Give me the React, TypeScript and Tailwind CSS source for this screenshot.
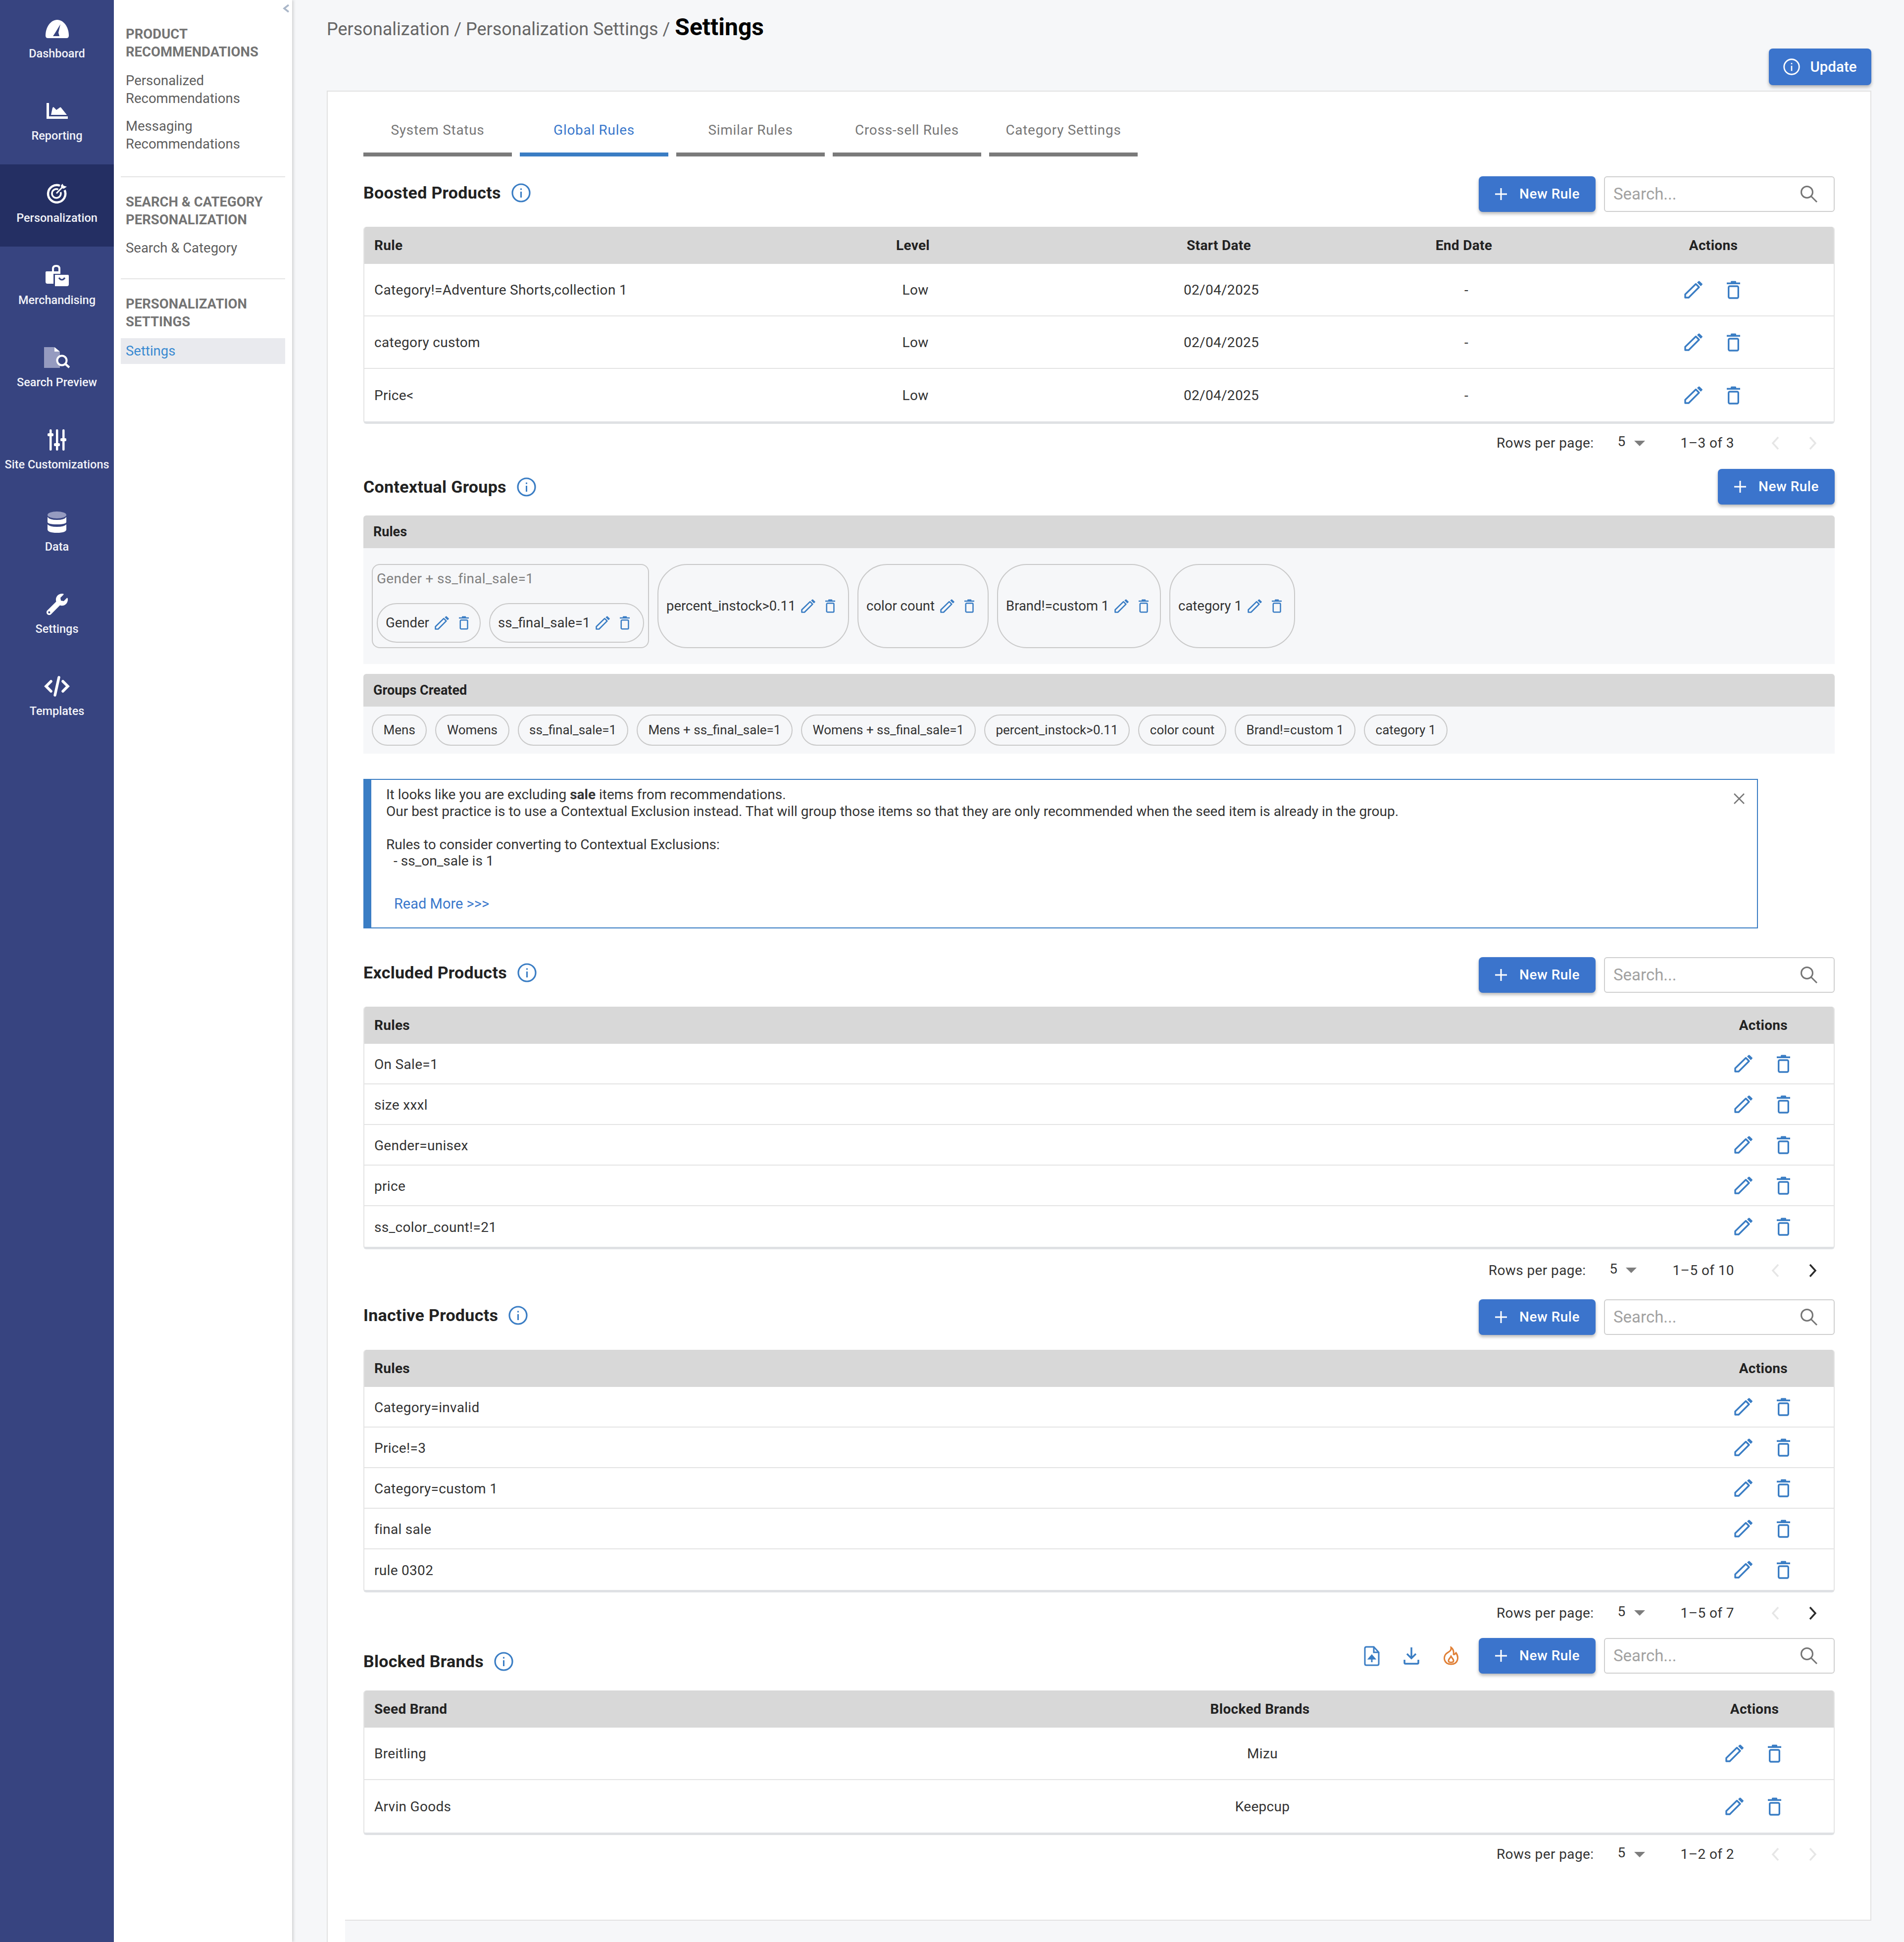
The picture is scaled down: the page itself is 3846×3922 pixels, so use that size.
import { FaWrench } from "react-icons/fa"

const BLUE = "#3a7dc4"

function Pencil({ size = 1 }: { size?: number }) {
  return (
    <svg width={38 * size} height={36 * size} viewBox="0 0 38 36" fill="none">
      <path d="M2 34V27.5L23.5 6.5L30 13L9 34H2Z" stroke={BLUE} strokeWidth="3.4" strokeLinejoin="round" />
      <path d="M26 3.5L29 .8Q30 0 31 .8L36.5 6Q37.5 7 36.5 8L33.5 11Z" fill={BLUE} />
    </svg>
  )
}

function Trash({ size = 1 }: { size?: number }) {
  return (
    <svg width={27 * size} height={37 * size} viewBox="0 0 27 37" fill="none">
      <path d="M8 3.5V2Q8 .5 9.5 .5H17.5Q19 .5 19 2V3.5H27V7H0V3.5Z" fill={BLUE} />
      <rect x="3.7" y="11" width="19.6" height="24" rx="2.5" stroke={BLUE} strokeWidth="3.4" />
    </svg>
  )
}

function Info({ color = BLUE, size = 39 }: { color?: string; size?: number }) {
  return (
    <svg width={size} height={size} viewBox="0 0 39 39" fill="none">
      <circle cx="19.5" cy="19.5" r="17.5" stroke={color} strokeWidth="3.2" />
      <rect x="18" y="17" width="3" height="12" fill={color} />
      <rect x="18" y="10.5" width="3" height="3" fill={color} />
    </svg>
  )
}

function Plus() {
  return (
    <svg width="26" height="26" viewBox="0 0 26 26" fill="none">
      <path d="M13 1V25M1 13H25" stroke="#fff" strokeWidth="3" />
    </svg>
  )
}

function NewRule({ className = "" }: { className?: string }) {
  return (
    <button className={`flex h-[72px] w-[236px] items-center justify-center gap-[24px] rounded-[8px] bg-[#3b74cc] text-[28px] font-medium tracking-[0.5px] text-white shadow-[0_4px_6px_rgba(0,0,0,0.28)] ${className}`}>
      <Plus />
      New Rule
    </button>
  )
}

function SearchBox() {
  return (
    <div className="ml-[17px] flex h-[72px] w-[466px] items-center justify-between rounded-[6px] border-2 border-[#cfcfcf] bg-white pl-[17px] pr-[32px]">
      <span className="text-[33px] text-[#a2a2a2]">Search...</span>
      <svg width="36" height="36" viewBox="0 0 36 36" fill="none">
        <circle cx="14" cy="14" r="11.5" stroke="#757575" strokeWidth="3" />
        <path d="M22.5 22.5L34 34" stroke="#757575" strokeWidth="3" />
      </svg>
    </div>
  )
}

function Title({ text, className = "" }: { text: string; className?: string }) {
  return (
    <div className={`flex items-center gap-[21px] ${className}`}>
      <h2 className="text-[34px] font-bold tracking-[0.3px] text-[#222]">{text}</h2>
      <Info />
    </div>
  )
}

function Actions({ className = "" }: { className?: string }) {
  return (
    <div className={`flex items-center ${className}`}>
      <span className="flex w-[80px] justify-center"><Pencil /></span>
      <span className="flex w-[80px] justify-center"><Trash /></span>
    </div>
  )
}

function Pager({ range, next = false, className = "" }: { range: string; next?: boolean; className?: string }) {
  return (
    <div className={`flex items-center justify-end pr-[35px] text-[28px] tracking-[0.4px] text-[#333] ${className}`}>
      <span>Rows per page:</span>
      <span className="ml-[48px] -translate-y-[3px]">5</span>
      <svg className="ml-[17px]" width="22" height="11" viewBox="0 0 22 11"><path d="M0 0H22L11 11Z" fill="#7d7d7d" /></svg>
      <span className="ml-[72px]">{range}</span>
      <svg className="ml-[74px]" width="18" height="30" viewBox="0 0 18 30" fill="none"><path d="M15 3L4 15L15 27" stroke="#e6e6e6" strokeWidth="3.5" /></svg>
      <svg className="ml-[58px]" width="18" height="30" viewBox="0 0 18 30" fill="none"><path d="M3 3L14 15L3 27" stroke={next ? "#2b2b2b" : "#e6e6e6"} strokeWidth="3.5" /></svg>
    </div>
  )
}

function TableShell({ children }: { children: React.ReactNode }) {
  return (
    <div className="overflow-hidden rounded-[6px] border-x-2 border-b-[5px] border-x-[#e4e4e4] border-b-[#dfe1e4] bg-white tracking-[0.3px]">
      {children}
    </div>
  )
}

function RuleTable({ rows, className = "" }: { rows: string[]; className?: string }) {
  return (
    <div className={className}>
      <TableShell>
        <div className="-mx-[2px] flex h-[75px] items-center justify-between bg-[#d8d8d8] pl-[22px] pr-[95px] text-[28px] font-bold text-[#222]">
          <span>Rules</span>
          <span>Actions</span>
        </div>
        {rows.map((r, i) => (
          <div key={r} className={`flex h-[82px] items-center justify-between pl-[20px] pr-[62px] text-[28px] text-[#333] ${i < rows.length - 1 ? "border-b-2 border-[#e4e4e4]" : ""}`}>
            <span className="translate-y-[2px]">{r}</span>
            <Actions />
          </div>
        ))}
      </TableShell>
    </div>
  )
}

const boosted = [
  { rule: "Category!=Adventure Shorts,collection 1" },
  { rule: "category custom" },
  { rule: "Price<" },
]

const colsClass = "grid grid-cols-[728px_764px_472px_518px_1fr] items-center"

function BoostedTable() {
  return (
    <div className="mt-[31px]">
      <TableShell>
        <div className={`${colsClass} -mx-[2px] h-[75px] bg-[#d8d8d8] text-[28px] font-bold text-[#222]`}>
          <span className="pl-[22px]">Rule</span>
          <span className="text-center">Level</span>
          <span className="text-center">Start Date</span>
          <span className="text-center">End Date</span>
          <span className="text-center">Actions</span>
        </div>
        {boosted.map((b, i) => (
          <div key={b.rule} className={`${colsClass} -mx-[2px] h-[106px] text-[28px] text-[#333] ${i < 2 ? "border-b-2 border-[#e4e4e4]" : ""}`}>
            <span className="translate-y-[1px] pl-[22px]">{b.rule}</span>
            <span className="translate-y-[1px] pl-[10px] text-center">Low</span>
            <span className="translate-y-[1px] pl-[10px] text-center">02/04/2025</span>
            <span className="translate-y-[1px] pl-[10px] text-center">-</span>
            <Actions className="justify-center" />
          </div>
        ))}
      </TableShell>
    </div>
  )
}

function RuleChip({ label, className = "" }: { label: string; className?: string }) {
  return (
    <div className={`flex items-center gap-[11px] whitespace-nowrap border-2 border-[#c9c9c9] pl-[16px] text-[27.5px] text-[#333] ${className}`}>
      <span>{label}</span>
      <span className="flex items-center gap-[19px]">
        <Pencil size={0.78} />
        <Trash size={0.75} />
      </span>
    </div>
  )
}

const groups = ["Mens", "Womens", "ss_final_sale=1", "Mens + ss_final_sale=1", "Womens + ss_final_sale=1", "percent_instock>0.11", "color count", "Brand!=custom 1", "category 1"]

function ContextualGroups() {
  return (
    <>
      <div className="mt-[22px] flex h-[66px] items-center rounded-t-[6px] bg-[#d8d8d8] pl-[20px] text-[27px] font-bold text-[#222]">Rules</div>
      <div className="flex h-[234px] gap-[17px] bg-[#f6f7f9] pl-[17px] pt-[32px]">
        <div className="flex h-[170px] w-[560px] flex-col rounded-[16px] border-2 border-[#c9c9c9] px-[8px]">
          <div className="pt-[10px] text-[28px] leading-[36px] tracking-[0.3px] text-[#808080]">Gender + ss_final_sale=1</div>
          <div className="mt-[31px] flex gap-[17px]">
            <RuleChip label="Gender" className="h-[80px] w-[210px] rounded-[40px]" />
            <RuleChip label="ss_final_sale=1" className="h-[80px] w-[313px] rounded-[40px]" />
          </div>
        </div>
        <RuleChip label="percent_instock>0.11" className="h-[170px] w-[387px] rounded-[60px]" />
        <RuleChip label="color count" className="h-[170px] w-[265px] rounded-[60px]" />
        <RuleChip label="Brand!=custom 1" className="h-[170px] w-[331px] rounded-[60px]" />
        <RuleChip label="category 1" className="h-[170px] w-[254px] rounded-[60px]" />
      </div>
      <div className="mt-[20px] flex h-[66px] items-center rounded-t-[6px] bg-[#d8d8d8] pl-[20px] text-[27px] font-bold text-[#222]">Groups Created</div>
      <div className="flex h-[95px] gap-[17px] bg-[#f6f7f9] pl-[17px] pt-[16px]">
        {groups.map((g) => (
          <span key={g} className="flex h-[63px] items-center rounded-[32px] border-2 border-[#c9c9c9] px-[21.6px] text-[26px] text-[#333]">{g}</span>
        ))}
      </div>
    </>
  )
}

function Alert() {
  return (
    <div className="relative mt-[51px] h-[302px] w-[2817px] border-2 border-l-[16px] border-[#3a7dc4] bg-white pl-[30px] pt-[13px] text-[28px] leading-[33.5px] text-[#333]">
      <p>It looks like you are excluding <b>sale</b> items from recommendations.</p>
      <p>Our best practice is to use a Contextual Exclusion instead. That will group those items so that they are only recommended when the seed item is already in the group.</p>
      <p className="mt-[33.5px]">Rules to consider converting to Contextual Exclusions:</p>
      <p className="pl-[15px]">- ss_on_sale is 1</p>
      <p className="mt-[53px] pl-[16px] text-[29px] text-[#3a78cc]">Read More {">>>"}</p>
      <svg className="absolute right-[24px] top-[26px]" width="24" height="24" viewBox="0 0 24 24" fill="none">
        <path d="M2 2L22 22M22 2L2 22" stroke="#777" strokeWidth="2.5" />
      </svg>
    </div>
  )
}

function SideIcon({ name }: { name: string }) {
  if (name === "Dashboard")
    return (
      <svg width="47" height="37" viewBox="0 0 47 37">
        <path d="M5 37H42Q47 37 47 32C47 14 36 0 23.5 0C11 0 0 14 0 32Q0 37 5 37Z" fill="#fff" />
        <path d="M30 9L26 26L28 33H15L19 27Z" fill="#374480" />
      </svg>
    )
  if (name === "Reporting")
    return (
      <svg width="43" height="32" viewBox="0 0 43 32">
        <path d="M0 0H5V27H43V32H0Z" fill="#fff" />
        <path d="M9 24L12 10Q13.5 7 15 9L20 14L27 9Q28 8 29 9L41 24Z" fill="#fff" />
      </svg>
    )
  if (name === "Personalization")
    return (
      <svg width="42" height="42" viewBox="0 0 42 42" fill="none">
        <path d="M27 6A17.5 17.5 0 1 0 36.5 15" stroke="#fff" strokeWidth="4.5" />
        <path d="M23.5 13.5A9 9 0 1 0 28.5 19" stroke="#fff" strokeWidth="3.5" />
        <path d="M20 21.5L32 9" stroke="#fff" strokeWidth="3" />
        <path d="M32 2L34.5 6L41 8L35 12L30 11L29 6Z" fill="#fff" />
      </svg>
    )
  if (name === "Merchandising")
    return (
      <svg width="47" height="43" viewBox="0 0 47 43" fill="none">
        <path d="M15 14V8Q15 2 21 2H22Q28 2 28 8V14" stroke="#fff" strokeWidth="4" />
        <path d="M2 13H30V18H16V38H4Q0 38 0 34V15Q0 13 2 13Z" fill="#fff" />
        <path d="M19 20H45Q47 20 47 22V39Q47 43 43 43H19Z" fill="#fff" />
        <path d="M27 26Q33 34 39 26" stroke="#374480" strokeWidth="3" />
      </svg>
    )
  if (name === "Search Preview")
    return (
      <svg width="52" height="43" viewBox="0 0 52 43" fill="none">
        <path d="M0 0H20L32 10V42H0Z" fill="#959bc0" />
        <path d="M21 0L32 9H21Z" fill="#fff" />
        <circle cx="36" cy="27" r="9.5" fill="#374480" stroke="#fff" strokeWidth="4" />
        <path d="M43 34L51 41" stroke="#fff" strokeWidth="4.5" />
      </svg>
    )
  if (name === "Site Customizations")
    return (
      <svg width="38" height="43" viewBox="0 0 38 43" fill="#fff">
        <rect x="4" y="0" width="4.5" height="43" rx="2" />
        <rect x="17" y="0" width="4.5" height="43" rx="2" />
        <rect x="30" y="0" width="4.5" height="43" rx="2" />
        <rect x="0" y="8" width="12" height="6" rx="2" />
        <rect x="13" y="28" width="12" height="6" rx="2" />
        <rect x="26" y="18" width="12" height="6" rx="2" />
      </svg>
    )
  if (name === "Data")
    return (
      <svg width="38" height="43" viewBox="0 0 38 43">
        <ellipse cx="19" cy="7" rx="19" ry="7" fill="#959bc0" />
        <path d="M0 11V21Q0 26 19 26T38 21V11Q34 17 19 17T0 11Z" fill="#fff" />
        <path d="M0 26V36Q0 43 19 43T38 36V26Q34 31 19 31T0 26Z" fill="#fff" />
      </svg>
    )
  if (name === "Settings") return <FaWrench size={43} color="#fff" />
  return (
    <svg width="52" height="42" viewBox="0 0 52 42" fill="none" stroke="#fff" strokeWidth="5.5" strokeLinecap="round">
      <path d="M14 11L4 21L14 31M38 11L48 21L38 31M30 3L22 39" />
    </svg>
  )
}

const sideItems = ["Dashboard", "Reporting", "Personalization", "Merchandising", "Search Preview", "Site Customizations", "Data", "Settings", "Templates"]

function Sidebar() {
  return (
    <aside className="w-[230px] shrink-0 bg-[#374480]">
      {sideItems.map((s) => (
        <div key={s} className={`flex h-[166px] flex-col items-center pt-[35px] text-[23.5px] font-medium text-[#f2f3f8] ${s === "Personalization" ? "bg-[#242f63]" : ""}`}>
          <div className="flex h-[46px] items-center"><SideIcon name={s} /></div>
          <span className="mt-[12px] whitespace-nowrap leading-[30px]">{s}</span>
        </div>
      ))}
    </aside>
  )
}

function SubNav() {
  const head = "pl-[10px] text-[27.5px] font-bold uppercase leading-[36px] text-[#747474]"
  const link = "pl-[10px] text-[27.5px] leading-[36px] text-[#5e5e5e]"
  return (
    <nav className="relative w-[360px] shrink-0 bg-white px-[14px] pt-[51px] shadow-[3px_0_5px_rgba(0,0,0,0.14)]">
      <svg className="absolute right-[5px] top-[8px]" width="14" height="18" viewBox="0 0 14 18" fill="none">
        <path d="M12 2L3 9L12 16" stroke="#a9b6c8" strokeWidth="3.5" />
      </svg>
      <div className={head}>Product<br />Recommendations</div>
      <div className={`${link} mt-[22px]`}>Personalized<br />Recommendations</div>
      <div className={`${link} mt-[20px]`}>Messaging<br />Recommendations</div>
      <div className="mt-[47px] h-[2px] bg-[#e4e4e4]" />
      <div className={`${head} mt-[32px]`}>Search &amp; Category<br />Personalization</div>
      <div className={`${link} mt-[21px]`}>Search &amp; Category</div>
      <div className="mt-[43px] h-[2px] bg-[#e4e4e4]" />
      <div className={`${head} mt-[32px]`}>Personalization<br />Settings</div>
      <div className="mt-[15px] flex h-[52px] items-center bg-[#e9eaee] pl-[10px] text-[27.5px] text-[#3a8ad2]">Settings</div>
    </nav>
  )
}

function BlockedTable() {
  const cols = "grid grid-cols-[974px_1674px_1fr] items-center"
  const rows = [["Breitling", "Mizu"], ["Arvin Goods", "Keepcup"]]
  return (
    <div className="mt-[34px]">
      <TableShell>
        <div className={`${cols} -mx-[2px] h-[75px] bg-[#d8d8d8] text-[28px] font-bold text-[#222]`}>
          <span className="pl-[22px]">Seed Brand</span>
          <span className="text-center">Blocked Brands</span>
          <span className="text-center">Actions</span>
        </div>
        {rows.map((r, i) => (
          <div key={r[0]} className={`${cols} -mx-[2px] h-[106px] text-[28px] text-[#333] ${i === 0 ? "border-b-2 border-[#e4e4e4]" : ""}`}>
            <span className="translate-y-[1px] pl-[22px]">{r[0]}</span>
            <span className="translate-y-[1px] pl-[10px] text-center">{r[1]}</span>
            <Actions className="justify-center" />
          </div>
        ))}
      </TableShell>
    </div>
  )
}

function BlockedTools() {
  return (
    <div className="mr-[40px] flex items-center gap-[48px]">
      <svg width="32" height="41" viewBox="0 0 32 41" fill="none">
        <path d="M2 5Q2 2 5 2H20L30 13V36Q30 39 27 39H5Q2 39 2 36Z" stroke={BLUE} strokeWidth="3" />
        <path d="M20 2V13H30" stroke={BLUE} strokeWidth="3" />
        <path d="M16 33V22M10 26L16 19L22 26Z" stroke={BLUE} strokeWidth="3" fill={BLUE} />
      </svg>
      <svg width="32" height="35" viewBox="0 0 32 35" fill="none" stroke={BLUE} strokeWidth="3.5">
        <path d="M16 0V21M7 13L16 22L25 13" />
        <path d="M2 25V31Q2 33 4 33H28Q30 33 30 31V25" />
      </svg>
      <svg width="32" height="38" viewBox="0 0 32 38" fill="none" stroke="#e07f35" strokeWidth="3">
        <path d="M16 2C17 10 12 10 6 15C0 21 1 36 16 36C31 36 32 21 26 13C24 16 22 17 21 16C22 10 20 5 16 2Z" />
        <path d="M16 20C14 24 10 26 11 30C12 33 20 33 21 30C22 26 18 24 16 20Z" />
      </svg>
    </div>
  )
}

export default function App() {
  const tabs = ["System Status", "Global Rules", "Similar Rules", "Cross-sell Rules", "Category Settings"]
  return (
    <div className="flex h-[3922px] w-[3846px] bg-[#f6f7f9] font-['Roboto',sans-serif]">
      <Sidebar />
      <SubNav />
      <main className="flex flex-1 flex-col pl-[70px] pr-[66px]">
        <header className="relative flex h-[183px] shrink-0 justify-between">
          <div className="flex items-baseline pt-[19px] text-[36px] text-[#666]">
            Personalization / Personalization Settings /
            <span className="ml-[10px] text-[48px] font-bold text-black">Settings</span>
          </div>
          <button className="mt-[98px] flex h-[74px] w-[207px] items-center justify-center gap-[20px] rounded-[8px] bg-[#3b74cc] text-[29.5px] font-medium text-white shadow-[0_4px_6px_rgba(0,0,0,0.28)]">
            <Info color="#fff" size={34} />
            Update
          </button>
        </header>

        <div className="flex flex-1 flex-col border-l-2 border-[#e2e2e2]">
          <section className="h-[3694px] shrink-0 border-x-0 border-t-2 border-r-2 border-[#e2e2e2] bg-white pl-[72px] pr-[72px]">
            <div className="flex gap-[16px] pt-[50px]">
              {tabs.map((t) => (
                <div key={t} className={`flex h-[81px] w-[300px] items-start justify-center border-b-8 pt-[7px] text-[28px] tracking-[0.7px] ${t === "Global Rules" ? "border-[#3a7dc4] text-[#3a78cc]" : "border-[#7a7a7a] text-[#777]"}`}>
                  {t}
                </div>
              ))}
            </div>

            <div className="mt-[40px] flex h-[71px] items-center justify-between">
              <Title text="Boosted Products" className="-translate-y-[2px]" />
              <div className="flex items-center"><NewRule /><SearchBox /></div>
            </div>
            <BoostedTable />
            <Pager range="1–3 of 3" className="h-[78px]" />

            <div className="mt-[13px] flex h-[72px] items-center justify-between">
              <Title text="Contextual Groups" />
              <NewRule />
            </div>
            <ContextualGroups />
            <Alert />

            <div className="mt-[58px] flex h-[72px] items-center justify-between">
              <Title text="Excluded Products" className="-translate-y-[5px]" />
              <div className="flex items-center"><NewRule /><SearchBox /></div>
            </div>
            <RuleTable className="mt-[28px]" rows={["On Sale=1", "size xxxl", "Gender=unisex", "price", "ss_color_count!=21"]} />
            <Pager range="1–5 of 10" next className="h-[85px]" />

            <div className="mt-[15px] flex h-[74px] items-center justify-between">
              <Title text="Inactive Products" className="-translate-y-[4px]" />
              <div className="flex items-center"><NewRule /><SearchBox /></div>
            </div>
            <RuleTable className="mt-[29px]" rows={["Category=invalid", "Price!=3", "Category=custom 1", "final sale", "rule 0302"]} />
            <Pager range="1–5 of 7" next className="h-[83px]" />

            <div className="mt-[9px] flex h-[72px] items-center justify-between">
              <Title text="Blocked Brands" className="translate-y-[11px]" />
              <div className="flex items-center"><BlockedTools /><NewRule /><SearchBox /></div>
            </div>
            <BlockedTable />
            <Pager range="1–2 of 2" className="h-[78px]" />
          </section>
          <div className="flex flex-1">
            <div className="w-[35px] bg-white" />
            <div className="flex-1 border-t-2 border-[#e2e2e2]" />
          </div>
        </div>
      </main>
    </div>
  )
}
